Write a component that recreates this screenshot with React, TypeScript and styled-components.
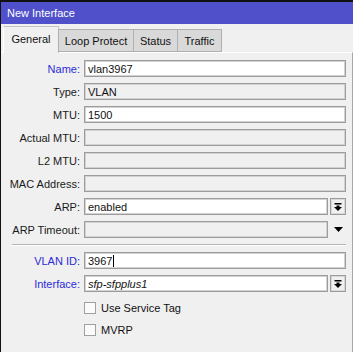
import React from "react";
import styled, { createGlobalStyle } from "styled-components";

const GlobalStyle = createGlobalStyle`
  html, body {
    margin: 0;
    padding: 0;
    background: #f0f0f0;
  }
  body {
    font-family: "Liberation Sans", Arial, sans-serif;
    font-size: 11px;
    color: #1a1a1a;
  }
`;

const Window = styled.div`
  width: 353px;
  height: 352px;
  box-sizing: border-box;
  border-top: 2px solid #111;
  border-left: 1px solid #111;
  background: #f0f0f0;
  display: flex;
  flex-direction: column;
  overflow: hidden;
`;

const TitleBar = styled.div`
  height: 22px;
  flex: none;
  background: #4f50ca;
  color: #fff;
  display: flex;
  align-items: center;
  padding-left: 6px;
  font-size: 11px;
`;

const TabStrip = styled.div`
  height: 28px;
  flex: none;
  display: flex;
  align-items: flex-end;
  padding-left: 2px;
  position: relative;
  z-index: 1;
`;

const Tab = styled.div<{ $active?: boolean; $w: number }>`
  box-sizing: border-box;
  width: ${(p) => p.$w}px;
  height: ${(p) => (p.$active ? 27 : 23)}px;
  margin-bottom: ${(p) => (p.$active ? -1 : 0)}px;
  margin-right: -1px;
  display: flex;
  align-items: center;
  justify-content: center;
  padding-bottom: ${(p) => (p.$active ? 3 : 0)}px;
  background: ${(p) => (p.$active ? "#f0f0f0" : "#d9d9d9")};
  border: 1px solid ${(p) => (p.$active ? "#c4c4c4" : "#b0b0b0")};
  border-bottom: ${(p) => (p.$active ? "none" : "1px solid #b0b0b0")};
  border-left-color: ${(p) => (p.$active ? "#ffffff" : "#b0b0b0")};
  color: #111;
`;

const Panel = styled.div`
  flex: 1;
  border-top: 1px solid #fff;
  border-right: 1px solid #a8a8a8;
  padding: 7px 6px 0 0;
  display: flex;
  flex-direction: column;
`;

const Row = styled.div<{ $after?: number }>`
  display: grid;
  grid-template-columns: 79px 1fr;
  column-gap: 4px;
  height: 17px;
  margin-bottom: ${(p) => p.$after ?? 6}px;
  align-items: center;
`;

const Label = styled.div<{ $blue?: boolean }>`
  text-align: right;
  white-space: nowrap;
  color: ${(p) => (p.$blue ? "#2b2bd8" : "#1a1a1a")};
`;

const Field = styled.div`
  display: flex;
  gap: 2px;
  height: 17px;
`;

const Input = styled.div<{ $disabled?: boolean; $italic?: boolean }>`
  flex: 1;
  box-sizing: border-box;
  height: 17px;
  border: 1px solid #9c9c9c;
  box-shadow: inset 0 0 0 1px #d2d2d2;
  background: ${(p) => (p.$disabled ? "#f0f0f0" : "#ffffff")};
  padding-left: 3px;
  display: flex;
  align-items: center;
  font-style: ${(p) => (p.$italic ? "italic" : "normal")};
  color: #111;
  white-space: nowrap;
`;

const Caret = styled.span`
  display: inline-block;
  width: 1px;
  height: 12px;
  background: #000;
  margin-left: 1px;
`;

const DropButton = styled.div`
  width: 16px;
  flex: none;
  box-sizing: border-box;
  border: 1px solid #9c9c9c;
  box-shadow: inset 0 0 0 1px #d8d8d8;
  background: #f0f0f0;
  display: flex;
  align-items: center;
  justify-content: center;
`;

const ArrowSlot = styled.div`
  width: 16px;
  flex: none;
  display: flex;
  align-items: center;
  justify-content: center;
`;

const Separator = styled.div`
  height: 0;
  border-top: 1px solid #b4b4b4;
  border-bottom: 1px solid #ffffff;
  margin: 0 0 6px 11px;
`;

const CheckRow = styled.label`
  display: flex;
  align-items: center;
  gap: 5px;
  height: 12px;
  margin-left: 83px;
  margin-bottom: 10px;
  color: #111;
`;

const Box = styled.span`
  width: 12px;
  height: 12px;
  box-sizing: border-box;
  border: 1px solid #a0a0a0;
  background: #fbfbfb;
  flex: none;
`;

const DropIcon = () => (
  <svg width="8" height="8" viewBox="0 0 8 8">
    <rect x="0.5" y="0" width="7" height="1.5" fill="#000" />
    <rect x="2.5" y="2.5" width="3" height="1.5" fill="#000" />
    <path d="M0 4 L8 4 L4 8 Z" fill="#000" />
  </svg>
);

const Triangle = () => (
  <svg width="9" height="5" viewBox="0 0 9 5">
    <path d="M0 0 L9 0 L4.5 5 Z" fill="#000" />
  </svg>
);

type FieldRow = {
  label: string;
  value?: string;
  blue?: boolean;
  disabled?: boolean;
  drop?: "button" | "arrow";
};

const topRows: FieldRow[] = [
  { label: "Name:", value: "vlan3967", blue: true },
  { label: "Type:", value: "VLAN", disabled: true },
  { label: "MTU:", value: "1500" },
  { label: "Actual MTU:", disabled: true },
  { label: "L2 MTU:", disabled: true },
  { label: "MAC Address:", disabled: true },
  { label: "ARP:", value: "enabled", drop: "button" },
  { label: "ARP Timeout:", disabled: true, drop: "arrow" },
];

const tabs = [
  { name: "General", w: 56, active: true },
  { name: "Loop Protect", w: 76 },
  { name: "Status", w: 45 },
  { name: "Traffic", w: 45 },
];

export default function App() {
  return (
    <>
      <GlobalStyle />
      <Window>
        <TitleBar>New Interface</TitleBar>
        <TabStrip>
          {tabs.map((t) => (
            <Tab key={t.name} $active={t.active} $w={t.w}>
              {t.name}
            </Tab>
          ))}
        </TabStrip>
        <Panel>
          {topRows.map((r) => (
            <Row key={r.label}>
              <Label $blue={r.blue}>{r.label}</Label>
              <Field>
                <Input $disabled={r.disabled}>{r.value}</Input>
                {r.drop === "button" && (
                  <DropButton>
                    <DropIcon />
                  </DropButton>
                )}
                {r.drop === "arrow" && (
                  <ArrowSlot>
                    <Triangle />
                  </ArrowSlot>
                )}
              </Field>
            </Row>
          ))}
          <Separator />
          <Row>
            <Label $blue>VLAN ID:</Label>
            <Field>
              <Input>
                3967
                <Caret />
              </Input>
            </Field>
          </Row>
          <Row $after={10}>
            <Label $blue>Interface:</Label>
            <Field>
              <Input $italic>sfp-sfpplus1</Input>
              <DropButton>
                <DropIcon />
              </DropButton>
            </Field>
          </Row>
          <CheckRow>
            <Box />
            Use Service Tag
          </CheckRow>
          <CheckRow>
            <Box />
            MVRP
          </CheckRow>
        </Panel>
      </Window>
    </>
  );
}
